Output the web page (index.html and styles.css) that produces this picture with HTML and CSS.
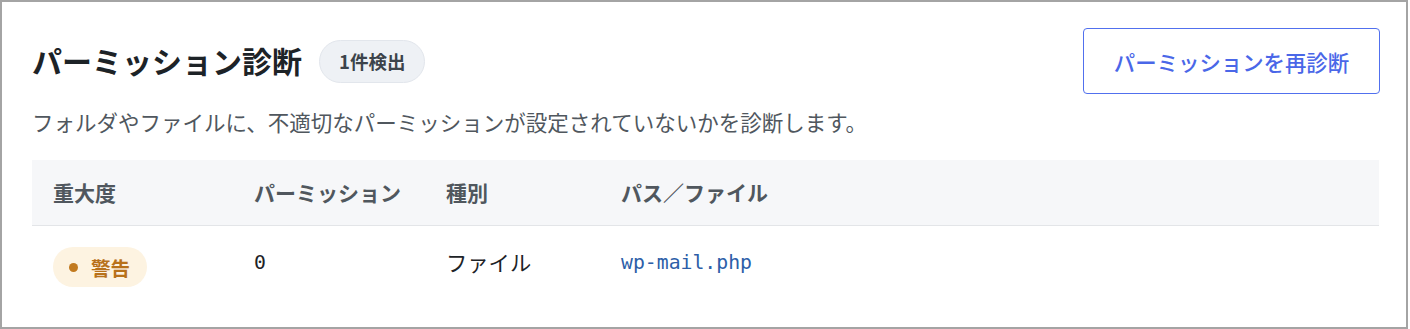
FILE: index.html
```html
<!DOCTYPE html>
<html lang="ja">
<head>
<meta charset="utf-8">
<title>パーミッション診断</title>
<link rel="stylesheet" href="styles.css">
</head>
<body>
<div class="frame">
  <section class="panel">
    <header class="panel-head">
      <div class="title-group">
        <h1 class="title">パーミッション診断</h1>
        <span class="count-badge">1件検出</span>
      </div>
      <button class="rescan-btn" type="button">パーミッションを再診断</button>
    </header>
    <p class="desc">フォルダやファイルに、不適切なパーミッションが設定されていないかを診断します。</p>
    <table class="result-table">
      <colgroup>
        <col class="col-sev">
        <col class="col-perm">
        <col class="col-type">
        <col class="col-path">
      </colgroup>
      <thead>
        <tr>
          <th>重大度</th>
          <th>パーミッション</th>
          <th>種別</th>
          <th>パス／ファイル</th>
        </tr>
      </thead>
      <tbody>
        <tr>
          <td><span class="sev-badge"><span class="sev-dot"></span>警告</span></td>
          <td class="mono">0</td>
          <td class="text">ファイル</td>
          <td class="mono path">wp-mail.php</td>
        </tr>
      </tbody>
    </table>
  </section>
</div>
</body>
</html>
```
FILE: styles.css
```css
* { box-sizing: border-box; }
html, body { margin: 0; padding: 0; background: #ffffff; }
body {
  font-family: "Noto Sans CJK JP", "Noto Sans", sans-serif;
  color: #1d2327;
}
.frame {
  width: 1408px;
  height: 329px;
  border: 2px solid #a4a4a4;
  background: #fff;
}
.panel {
  padding: 24px 26px 0 30px;
}
.panel-head {
  display: flex;
  align-items: center;
  justify-content: space-between;
}
.title-group {
  display: flex;
  align-items: center;
  gap: 17px;
}
.title {
  margin: 0;
  font-size: 30px;
  font-weight: 700;
  line-height: 40px;
  color: #1d2327;
}
.count-badge {
  display: inline-flex;
  align-items: center;
  height: 43px;
  padding: 0 19px;
  border-radius: 22px;
  background: #eef1f5;
  border: 1px solid #e2e6ec;
  font-size: 18.5px;
  font-weight: 700;
  color: #3c434a;
  margin-top: 2px;
}
.rescan-btn {
  width: 297px;
  height: 66px;
  border: 1.5px solid #5170ee;
  border-radius: 4px;
  background: #fff;
  color: #4a67e8;
  font-family: inherit;
  font-size: 21.4px;
  font-weight: 500;
  padding: 0;
  margin-top: 2px;
}
.desc {
  margin: 12px 0 0 0;
  font-size: 21.5px;
  line-height: 32px;
  color: #50575e;
}
.result-table {
  margin-top: 22px;
  width: 1347px;
  border-collapse: collapse;
  table-layout: fixed;
}
.col-sev { width: 201px; }
.col-perm { width: 192px; }
.col-type { width: 175px; }
.result-table th {
  background: #f6f7f9;
  height: 65px;
  padding: 0 0 0 21px;
  text-align: left;
  font-size: 21px;
  font-weight: 600;
  color: #50575e;
  border-bottom: 1px solid #e3e5e8;
}
.result-table td {
  height: 82px;
  padding: 0 0 0 21px;
  font-size: 21.3px;
  color: #1d2327;
  vertical-align: middle;
}
.result-table td.text {
  padding-bottom: 10px;
}
.result-table td.mono {
  font-family: "DejaVu Sans Mono", "Liberation Mono", monospace;
  font-size: 19.8px;
  padding-bottom: 8px;
}
.result-table td.path {
  color: #2c5ea8;
}
.sev-badge {
  display: inline-flex;
  align-items: center;
  height: 40px;
  padding: 0 17px 0 16px;
  border-radius: 20px;
  background: #fdf3e1;
  color: #b8711a;
  font-size: 19.5px;
  font-weight: 700;
  margin-top: 2px;
}
.sev-dot {
  width: 9px;
  height: 9px;
  border-radius: 50%;
  background: #c27a1f;
  margin-right: 13px;
}
```
